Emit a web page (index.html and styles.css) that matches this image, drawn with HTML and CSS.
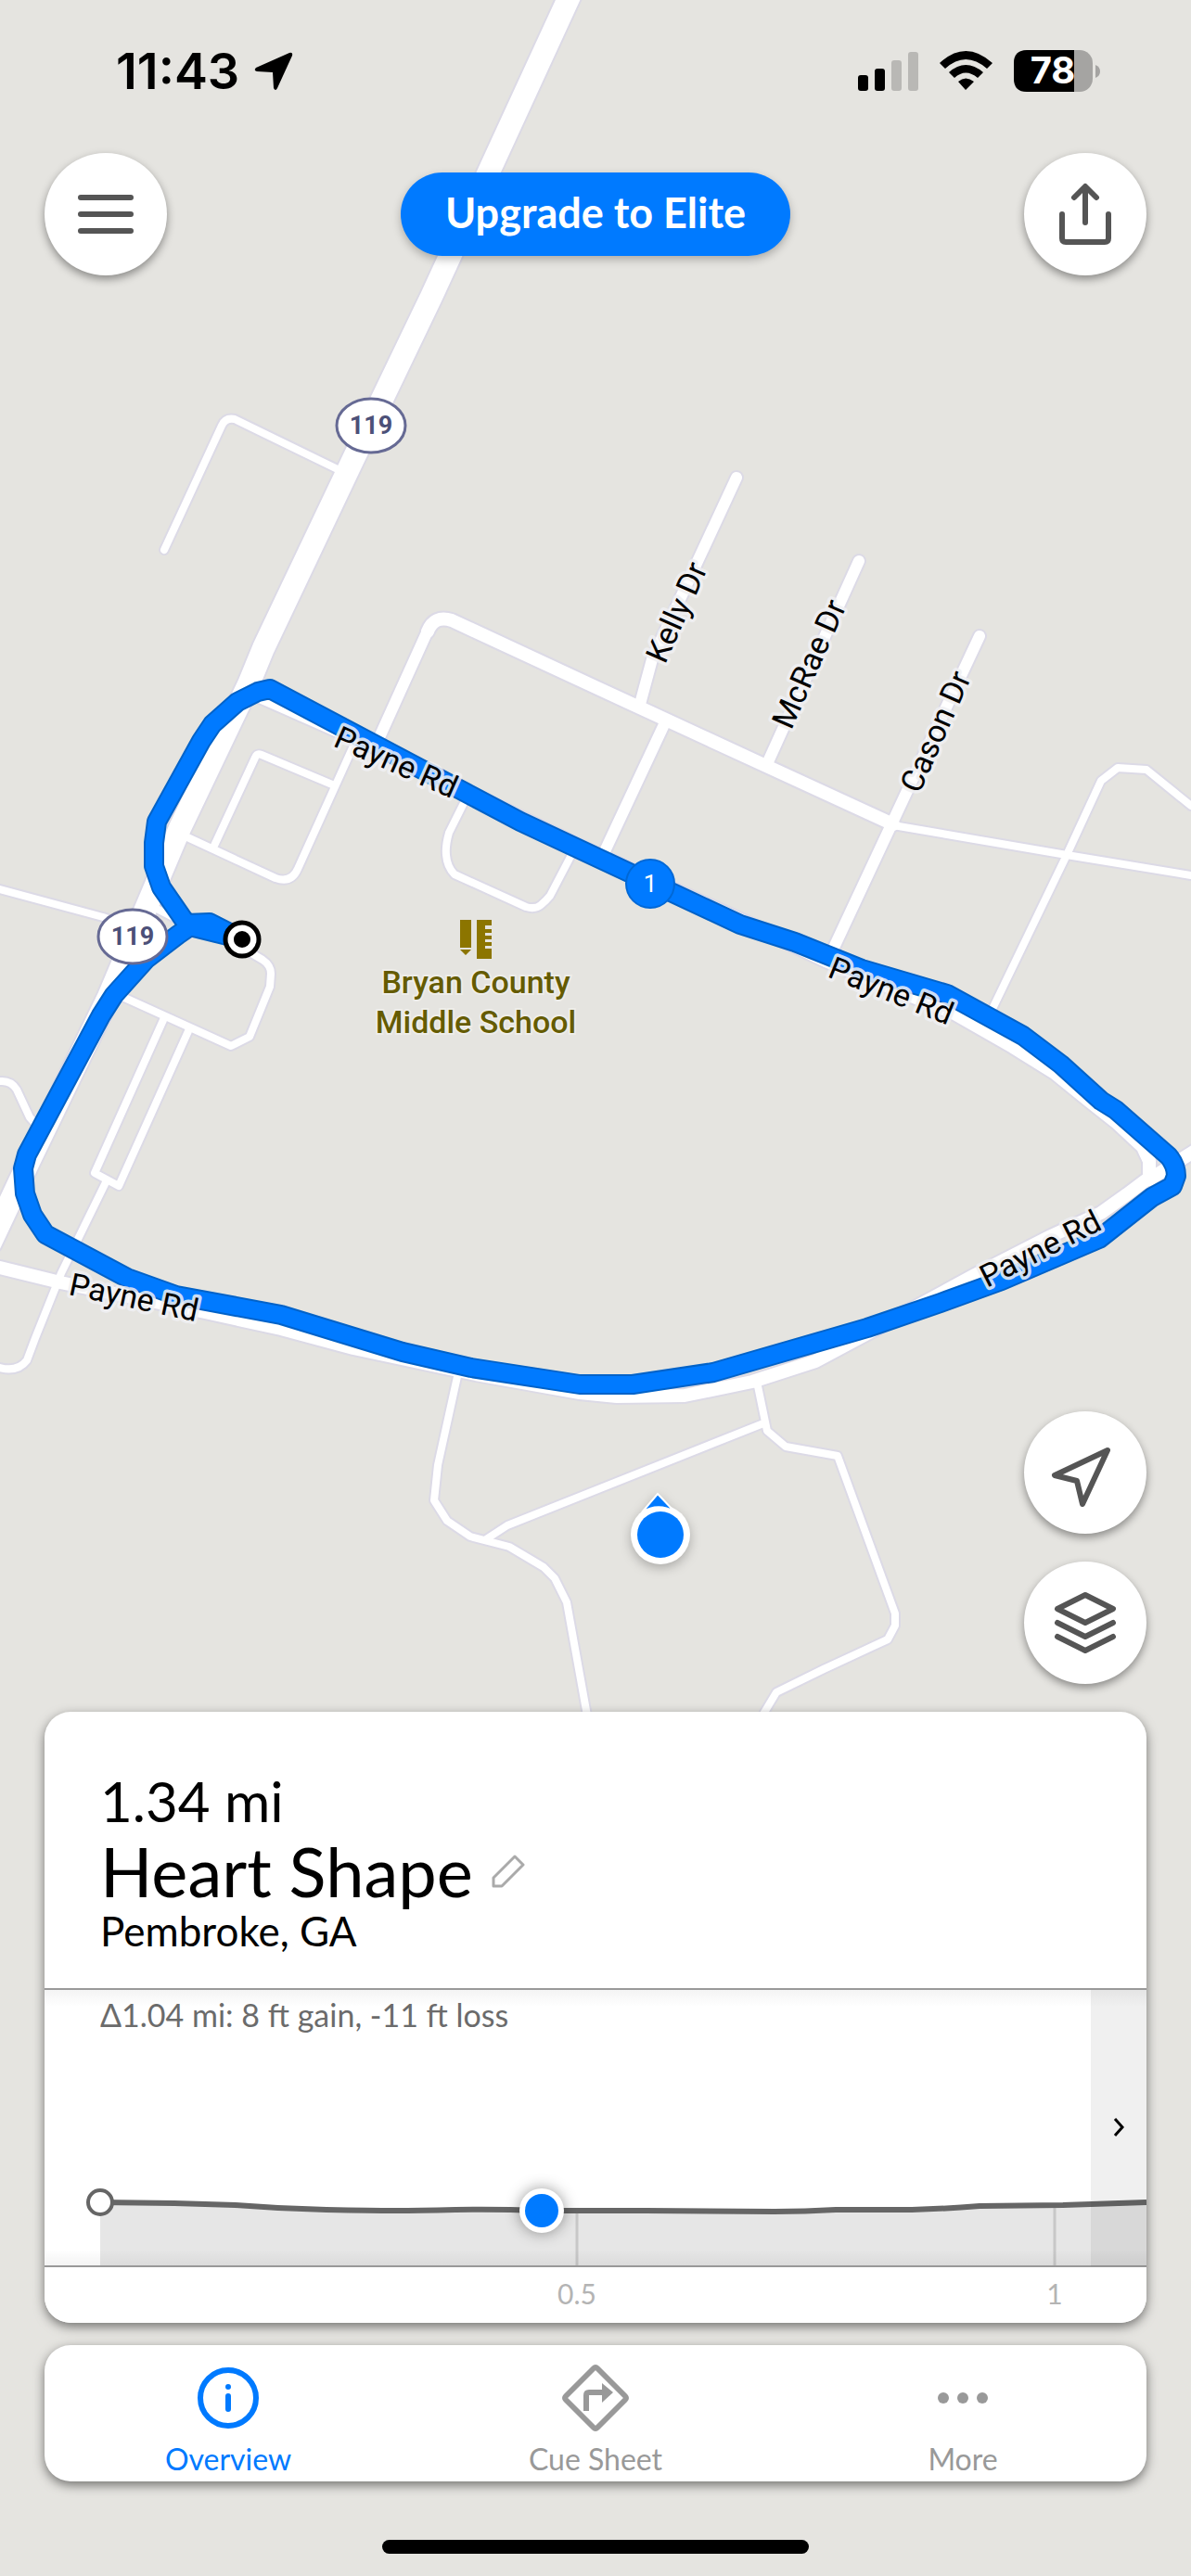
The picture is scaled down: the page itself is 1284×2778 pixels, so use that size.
FILE: index.html
```html
<!DOCTYPE html>
<html lang="en">
  <head>
    <meta charset="utf-8">
    <title>Heart Shape</title>
    <link rel="stylesheet" href="styles.css">
  </head>
  <body>
    <svg class="map" viewBox="0 0 1284 2778" preserveAspectRatio="xMidYMin slice">
      <defs>
        <g id="paths">
          <path d="M177 593L239 459Q243 450 253 452L368 508"/>
          <path d="M383 800L321 937Q314 953 297 947L200 902M358 846L282 814Q277 812 275 817L230 914"/>
          <path d="M499 868L484 898Q480 912 481 922Q482 935 490 943L567 978Q577 981 583 976Q589 971 593 966L616 922"/>
          <path d="M0 959L111 989L143 1000M165 978L200 996M261 1022L283 1035Q292 1041 292 1050L291 1064L269 1118L249 1128L130 1074"/>
          <path d="M176 1100L102 1265L128 1279L203 1112M115 1273L66 1373L38 1443L29 1467Q19 1480 0 1475"/>
          <path d="M0 1166Q12 1165 18 1175L32 1205L42 1216"/>
          <path d="M963 890L1150 922L1284 944M1284 869L1236 830L1205 828L1187 842L1150 922L1068 1092"/>
          <path d="M494 1480L472 1580L468 1618L482 1640L507 1657L549 1668L586 1690L598 1702L611 1728L633 1850"/>
          <path d="M524 1660L547 1645L823 1535M816 1490L827 1543L847 1560L903 1570L965 1740L965 1753L957 1768L888 1800L837 1825L822 1850"/>
        </g>
        <g id="streets">
          <path d="M794 515L703 711L689 763M926 605L826 826M1056 686L898 1024M718 777L652 918M405 804L462 678"/>
        </g>
        <g id="avenues">
          <path d="M461 681Q468 663 487 669L642 741L826 826L963 889"/>
          <path d="M278 750L369 790L500 852L642 921L798 992L890 1036L1029 1093L1092 1129L1137 1157L1174 1187L1203 1210L1232 1237L1239 1252L1239 1270L1215 1288L1187 1308L1133 1333L1051 1375L935 1438L879 1468L811 1490L738 1505L665 1506L625 1502L513 1482L381 1454L303 1433L221 1415L65 1383L0 1367"/>
          <path d="M1239 1272L1290 1240"/>
        </g>
        <path id="highway" d="M614 -4L465 320L379 499L284 699L268 738L194 893L158 978L117 1075L31 1253L-10 1340"/>
        <path id="route" d="M261 1013L226 995L201 996L174 957L166 934L166 909L169 886L217 799L229 781L256 757L278 746L291 743L561 886L642 924L798 997L857 1016L929 1045L1021 1072L1103 1117L1144 1148L1187 1187L1203 1197L1260 1247Q1268 1257 1268 1268L1264 1279L1242 1291L1185 1336L1080 1381L1014 1405L935 1432L769 1480L682 1493L625 1493L508 1475L434 1458L303 1418L190 1397L137 1378L49 1331L35 1310L27 1287L25 1260L29 1245L109 1095L123 1073L158 1034L192 1008L205 999L261 1013"/>
      </defs>

      <!-- road casings go first so junctions stay open -->
      <g class="road casing">
        <use href="#paths" stroke-width="12"/>
        <use href="#streets" stroke-width="16"/>
        <use href="#avenues" stroke-width="18"/>
        <use href="#highway" stroke-width="28"/>
      </g>
      <g class="road">
        <use href="#paths" stroke-width="8"/>
        <use href="#streets" stroke-width="12"/>
        <use href="#avenues" stroke-width="14"/>
        <use href="#highway" stroke-width="24"/>
      </g>

      <use href="#route" class="route-edge"/>
      <use href="#route" class="route"/>

      <g class="street-name">
        <text transform="translate(358 804) rotate(24)">Payne Rd</text>
        <text transform="translate(891 1053) rotate(22)">Payne Rd</text>
        <text transform="translate(1064 1389) rotate(-27)">Payne Rd</text>
        <text transform="translate(73 1396) rotate(12)">Payne Rd</text>
        <text transform="translate(717 717) rotate(-66)">Kelly Dr</text>
        <text transform="translate(853 788) rotate(-66)">McRae Dr</text>
        <text transform="translate(991 857) rotate(-66)">Cason Dr</text>
      </g>

      <g class="shield">
        <ellipse cx="400" cy="459" rx="37" ry="29"/>
        <text x="400" y="468">119</text>
        <ellipse cx="143" cy="1010" rx="37" ry="29"/>
        <text x="143" y="1019">119</text>
      </g>

      <g class="school">
        <path d="M496 992h12v30h-12zM496 1024h12l-6 6zM514 992h16v6h-7v4h7v4h-7v3h7v4h-7v3h7v4h-7v3h7v11h-16z"/>
        <text x="513" y="1071">Bryan County</text>
        <text x="513" y="1114">Middle School</text>
      </g>

      <g class="mile">
        <circle cx="701" cy="953" r="26"/>
        <text x="701" y="962">1</text>
      </g>

      <circle cx="261" cy="1013" r="18" fill="#fff" stroke="#000" stroke-width="5"/>
      <circle cx="261" cy="1013" r="9"/>

      <g class="puck">
        <circle cx="712" cy="1655" r="32" fill="#fff"/>
        <path d="M709 1611L727 1630Q709 1620 692 1631z" fill="#007aff" stroke="#fff" stroke-width="2"/>
      </g>
      <circle cx="712" cy="1655" r="25" fill="#007aff"/>
    </svg>

    <div class="screen">
      <div class="status">
        <span class="time">11:43</span>
        <svg width="42" height="42" viewBox="0 0 42 42"><path d="M38 1Q42 0 41 4L25 39Q23 43 21 39L20 22L3 21Q-1 20 2 17z"/></svg>
        <svg class="system" width="262" height="46" viewBox="0 0 262 46">
          <rect x="0" y="27" width="11" height="17" rx="3"/>
          <rect x="18" y="20" width="11" height="24" rx="3"/>
          <g fill="#b9b8b5">
            <rect x="36" y="11" width="11" height="33" rx="3"/>
            <rect x="54" y="2" width="11" height="42" rx="3"/>
          </g>
          <path d="M88 14Q116 -12 145 14L139 20Q116 0 94 20zM98 24Q116 8 135 24L129 30Q116 19 104 30zM108 34Q116 27 125 34L116 43z"/>
          <rect x="168" y="0" width="85" height="45" rx="14" fill="#a5a4a2"/>
          <path d="M182 0h51v45h-51q-14 0 -14 -14v-17q0 -14 14 -14z"/>
          <path d="M256 16q5 2 5 7t-5 7z" fill="#a5a4a2"/>
          <text x="210" y="36" class="battery">78</text>
        </svg>
      </div>

      <div class="toolbar">
        <button class="round" aria-label="Menu">
          <svg viewBox="-66 -66 132 132"><path d="M-27 -18H27M-27 0H27M-27 18H27"/></svg>
        </button>
        <button class="upgrade">Upgrade to Elite</button>
        <button class="round" aria-label="Share">
          <svg viewBox="-66 -66 132 132"><path d="M-25 0V26Q-25 30 -21 30H21Q25 30 25 26V0M0 9V-29M-12 -18L0 -30L12 -18"/></svg>
        </button>
      </div>

      <div class="side">
        <button class="round" aria-label="Locate me">
          <svg viewBox="-66 -66 132 132"><path d="M24 -24L-33 3L-9 9L-3 34z"/></svg>
        </button>
        <button class="round" aria-label="Map layers">
          <svg viewBox="-66 -66 132 132"><path d="M0 -30L30 -15L0 0L-30 -15zM-30 0L0 15L30 0M-30 15L0 30L30 15"/></svg>
        </button>
      </div>

      <div class="card">
        <div class="summary">
          <p class="distance">1.34 mi</p>
          <div class="title">
            <h1>Heart Shape</h1>
            <button class="edit" aria-label="Edit name">
              <svg width="36" height="36" viewBox="0 0 36 36"><path d="M2 34V25L25 2L34 11L11 34z"/></svg>
            </button>
          </div>
          <p class="place">Pembroke, GA</p>
        </div>
        <div class="elevation">
          <p class="gain">Δ1.04 mi: 8 ft gain, -11 ft loss</p>
          <svg class="chart" viewBox="0 60 1188 299">
            <defs>
              <linearGradient id="fade" x1="0" y1="0" x2="0" y2="1">
                <stop offset="0" stop-color="#000" stop-opacity="0"/>
                <stop offset="1" stop-color="#000" stop-opacity="0.05"/>
              </linearGradient>
            </defs>
            <path d="M60 229L140 230L206 232L304 237L378 238L443 237L536 238L648 238L787 239L853 237L935 237L1008 233L1098 232L1188 229V298H60z" fill="#e6e6e6"/>
            <path d="M574 240V298M1089 234V298" stroke="#c8c8c8" stroke-width="3"/>
            <path class="profile" d="M60 229L140 230L206 232Q255 236 304 237T378 238T443 237T536 238L648 238L787 239Q820 239 853 237L935 237Q971 236 1008 233L1098 232L1188 229"/>
            <rect x="0" y="280" width="1188" height="18" fill="url(#fade)"/>
            <path d="M0 298H1188" stroke="#999" stroke-width="2"/>
            <circle cx="60" cy="229" r="13" fill="#fff" stroke="#666" stroke-width="4"/>
            <g class="cursor">
              <circle cx="536" cy="238" r="24" fill="#fff"/>
            </g>
            <circle cx="536" cy="238" r="18" fill="#007aff"/>
            <g class="tick">
              <text x="574" y="339">0.5</text>
              <text x="1089" y="339">1</text>
            </g>
          </svg>
          <button class="next" aria-label="Scroll chart">
            <svg width="12" height="20" viewBox="0 0 12 20"><path d="M2 1L10 10L2 19"/></svg>
          </button>
        </div>
      </div>

      <nav class="tabs">
        <a href="#overview" class="active">
          <svg width="72" height="72" viewBox="0 0 72 72"><circle cx="36" cy="36" r="30"/><path d="M36 34V48M36 24V24" stroke-linecap="round"/></svg>
          Overview
        </a>
        <a href="#cues">
          <svg width="72" height="72" viewBox="0 0 72 72"><path d="M34 4Q36 2 38 4L68 34Q70 36 68 38L38 68Q36 70 34 68L4 38Q2 36 4 34z"/><path d="M26 50V33Q26 30 29 30H44"/><path class="solid" d="M43 20L55 30L43 41z"/></svg>
          Cue Sheet
        </a>
        <a href="#more">
          <svg width="72" height="72" viewBox="0 0 72 72"><g class="solid"><circle cx="15" cy="36" r="6"/><circle cx="36" cy="36" r="6"/><circle cx="57" cy="36" r="6"/></g></svg>
          More
        </a>
      </nav>
      <div class="home"></div>
    </div>
  </body>
</html>
```

FILE: styles.css
```css
* {
  box-sizing: border-box;
}

body {
  margin: 0;
  background: #e5e4e0;
  font-family: Lato, sans-serif;
  color: #000;
}

p, h1 {
  margin: 0;
  font-weight: 400;
}

button {
  border: none;
  padding: 0;
  font-family: inherit;
  cursor: pointer;
}

/* map */
.map {
  position: absolute;
  top: 0;
  left: 0;
  width: 100%;
  height: 100%;
  font-family: Roboto, sans-serif;
}

.road {
  fill: none;
  stroke: #fff;
  stroke-linecap: round;
  stroke-linejoin: round;
}

.casing {
  stroke: #dcdae6;
}

.route, .route-edge {
  fill: none;
  stroke: #007aff;
  stroke-width: 18px;
  stroke-linejoin: round;
}

.route-edge {
  stroke: #0062c8;
  stroke-width: 22px;
}

.street-name {
  font-size: 34px;
  paint-order: stroke;
  stroke: rgba(240, 240, 243, 0.85);
  stroke-width: 7px;
  stroke-linejoin: round;
}

.shield ellipse {
  fill: #fff;
  stroke: #666a94;
  stroke-width: 3px;
}

.shield text {
  fill: #4c5078;
  font-size: 27px;
  font-weight: 700;
  text-anchor: middle;
}

.school {
  fill: #8c7500;
}

.school text {
  fill: #655b00;
  font-size: 34px;
  font-weight: 500;
  text-anchor: middle;
  paint-order: stroke;
  stroke: #eeede9;
  stroke-width: 4px;
}

.mile circle {
  fill: #007aff;
  stroke: #0068d6;
  stroke-width: 2px;
}

.mile text {
  fill: #fff;
  font-size: 26px;
  text-anchor: middle;
}

.puck {
  filter: drop-shadow(0 4px 6px rgba(0, 0, 0, 0.25));
}

/* everything over the map */
.screen {
  position: relative;
  display: flex;
  flex-direction: column;
  min-height: 100vh;
  padding: 0 48px 24px;
}

.status {
  display: flex;
  align-items: center;
  gap: 16px;
  height: 117px;
  padding: 36px 49px 0 77px;
}

.time {
  font-family: Inter, sans-serif;
  font-size: 54px;
  font-weight: 600;
  line-height: 64px;
}

.system {
  margin-left: auto;
}

.battery {
  fill: #fff;
  font-family: Inter, sans-serif;
  font-size: 40px;
  font-weight: 700;
  text-anchor: middle;
}

.toolbar {
  display: flex;
  justify-content: space-between;
  align-items: center;
  margin-top: 48px;
}

.round {
  width: 132px;
  height: 132px;
  border-radius: 50%;
  background: #fff;
  box-shadow: 0 4px 10px rgba(0, 0, 0, 0.4);
}

.round svg {
  display: block;
  fill: none;
  stroke: #555;
  stroke-width: 6px;
  stroke-linecap: round;
  stroke-linejoin: round;
}

.upgrade {
  width: 420px;
  height: 90px;
  padding-bottom: 4px;
  border-radius: 45px;
  background: #007aff;
  box-shadow: 0 4px 10px rgba(0, 0, 0, 0.25);
  color: #fff;
  font-size: 45px;
  font-weight: 700;
}

.side {
  display: flex;
  flex-direction: column;
  align-items: flex-end;
  gap: 30px;
  margin-top: auto;
}

.card, .tabs {
  border-radius: 28px;
  background: #fff;
  box-shadow: 0 4px 12px rgba(0, 0, 0, 0.5);
}

.card {
  margin-top: 30px;
  overflow: hidden;
}

.summary {
  height: 300px;
  padding: 60px 60px 0;
  border-bottom: 2px solid #999;
}

.distance {
  font-size: 60px;
  line-height: 72px;
}

.title {
  display: flex;
  align-items: center;
  gap: 20px;
}

h1 {
  font-size: 74px;
  line-height: 80px;
}

.edit {
  background: none;
}

.edit svg {
  display: block;
  fill: none;
  stroke: #aaa;
  stroke-width: 3px;
  stroke-linejoin: round;
}

.place {
  font-size: 44px;
  line-height: 48px;
}

.elevation {
  position: relative;
  background: linear-gradient(#f4f4f4, #fff 18px);
}

.gain {
  height: 60px;
  padding: 7px 60px;
  color: #6b6b6b;
  font-size: 34px;
  line-height: 40px;
}

.chart {
  display: block;
  width: 100%;
}

.profile {
  fill: none;
  stroke: #666;
  stroke-width: 6px;
}

.cursor {
  filter: drop-shadow(0 0 8px rgba(0, 0, 0, 0.4));
}

.tick {
  fill: #b4b4b4;
  font-size: 30px;
  text-anchor: middle;
}

.next {
  position: absolute;
  top: 0;
  right: 0;
  bottom: 61px;
  width: 60px;
  background: rgba(0, 0, 0, 0.06);
}

.next svg {
  fill: none;
  stroke: #000;
  stroke-width: 3px;
}

.tabs {
  display: grid;
  grid-template-columns: repeat(3, 1fr);
  height: 147px;
  margin-top: 24px;
}

.tabs a {
  display: flex;
  flex-direction: column;
  align-items: center;
  gap: 10px;
  padding-top: 21px;
  color: #999;
  font-size: 32px;
  line-height: 40px;
  text-decoration: none;
}

.tabs svg {
  fill: none;
  stroke: #999;
  stroke-width: 6px;
}

.tabs .solid {
  fill: #999;
  stroke: none;
}

.tabs .active {
  color: #007aff;
}

.tabs .active svg {
  stroke: #007aff;
}

.home {
  width: 460px;
  height: 15px;
  margin: 63px auto 0;
  border-radius: 8px;
  background: #000;
}
```
